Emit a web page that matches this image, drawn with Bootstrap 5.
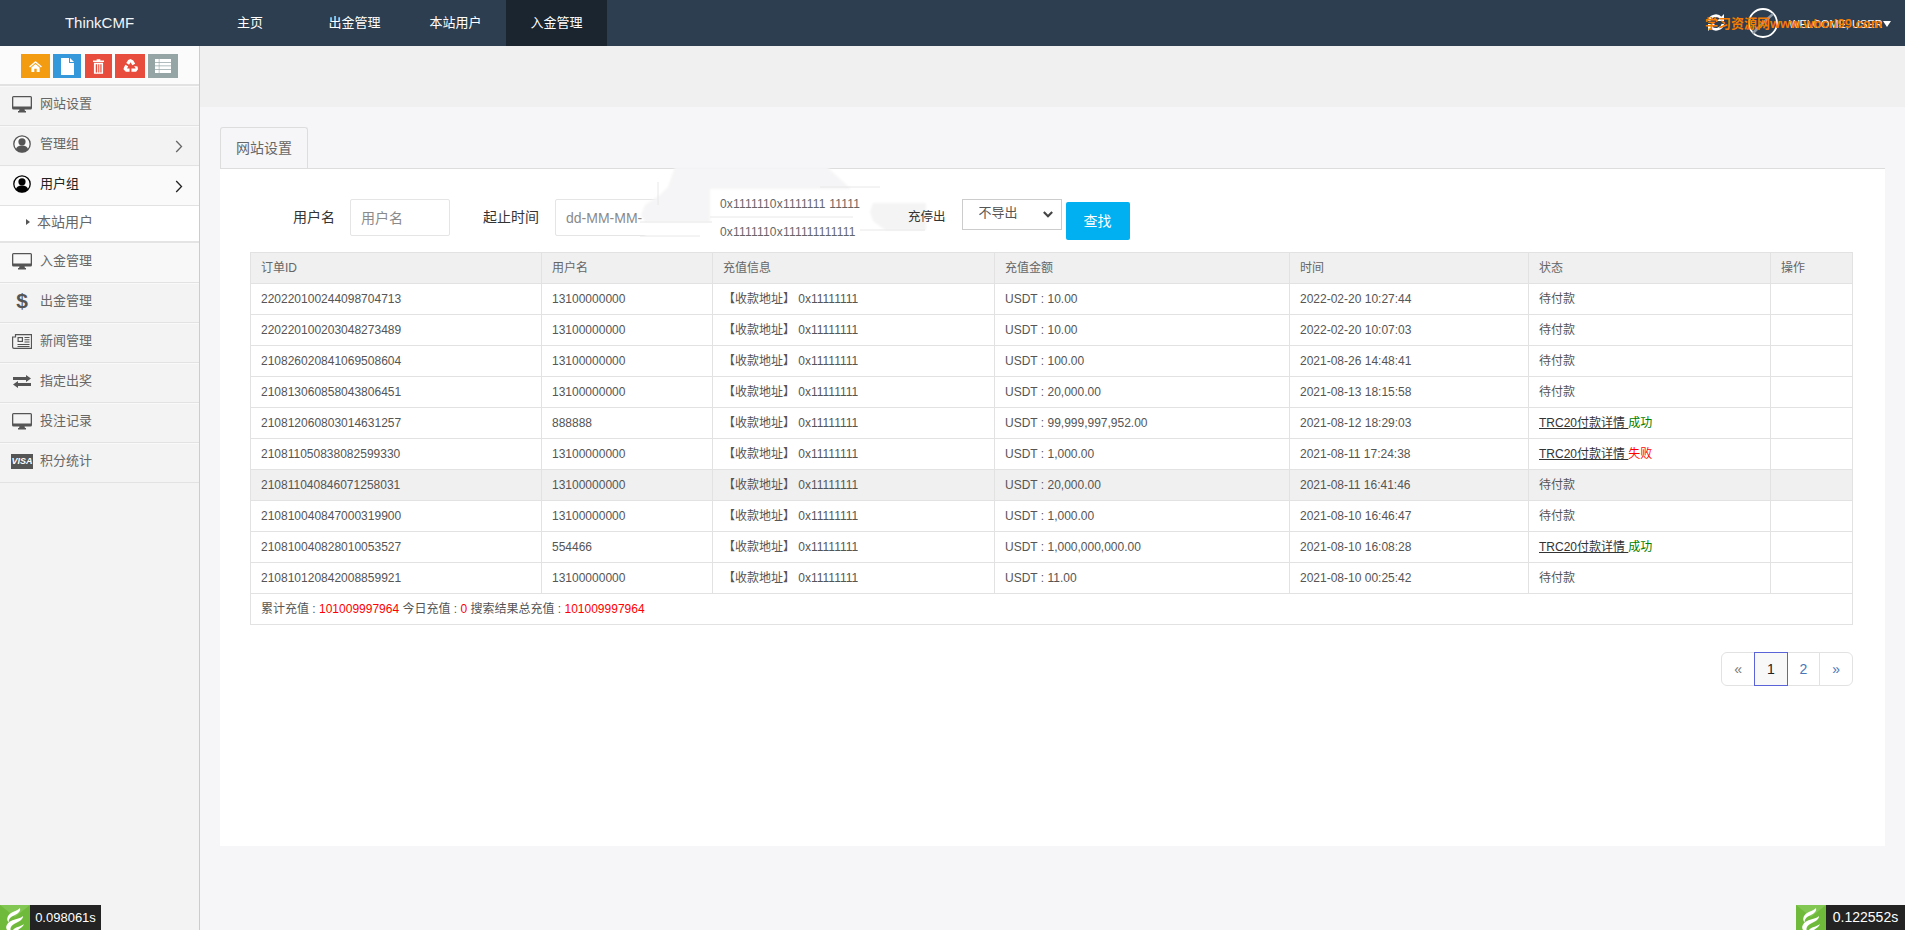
<!DOCTYPE html>
<html lang="zh-CN">
<head>
<meta charset="utf-8">
<title>ThinkCMF</title>
<link href="https://cdn.jsdelivr.net/npm/bootstrap@5.3.0/dist/css/bootstrap.min.css" rel="stylesheet">
<style>
html,body{height:100%;overflow:hidden}
body{font-family:"Liberation Sans","Noto Sans CJK SC",sans-serif;font-size:12px;color:#555;background:#f6f6f8}
.topbar{height:46px;background:#2c3e50;padding:0;flex-wrap:nowrap;justify-content:flex-start}
.topbar .brandname{width:199px;text-align:center;color:#f4f6f7;font-size:15px;line-height:46px;padding:0;margin:0}
.topitem{display:block;height:46px;line-height:46px;padding:0;color:#fff;font-size:13px;text-decoration:none;width:101px;text-align:center;white-space:nowrap}
.topitem.first{width:76px;margin:0 16px 0 13px}
.topitem.on{background:#1a252f}
.topitem:hover{color:#fff}
.userzone{position:relative;margin-left:auto;height:46px;width:205px;color:#fff}
.userzone .rfr{position:absolute;left:6px;top:13px}
.userzone .ava{position:absolute;left:48px;top:8px}
.userzone .wel{position:absolute;left:89px;top:17px;font-size:11px;line-height:14px;color:#fff;white-space:nowrap}
.userzone .car{position:absolute;left:183px;top:21px;width:0;height:0;border:4px solid transparent;border-top:6px solid #fff;border-bottom:0}
.wmark{position:absolute;left:5px;top:15px;color:#f57c00;font-weight:700;font-size:13px;line-height:18px;white-space:nowrap}
.shell{height:884px}
.sidecol{width:200px;flex:none;background:#f3f3f3;border-right:1px solid #ccc}
.toolrow{height:40px;background:#fbfbfb;border-bottom:2px solid #e2e2e2;padding:8px 0 0 21px;gap:3px}
.tbtn{display:flex;align-items:center;justify-content:center;height:24px;border:0;border-radius:0;padding:0}
.t1{width:29px;background:#f39c12}.t2{width:28px;background:#3498db;margin-right:1px}.t3{width:27px;background:#e74c3c}.t4{width:30px;background:#e74c3c}.t5{width:30px;background:#95a5a6}
.sideitem{display:flex;align-items:center;height:40px;border-bottom:1px solid #e2e2e2;border-top:1px solid #f9f9f9;color:#666;font-size:13px;padding:0 0 4px 0;text-decoration:none;position:relative}
.sideitem .ic{width:44px;margin-right:-4px;flex:none;display:flex;justify-content:center;color:#555}
.sideitem .chev{position:absolute;left:175px;top:13px}
.sideitem.open{background:#fafafa;color:#222}
.sideitem.open .ic{color:#000}
.sideitem.soft{background:#f8f8f8}
.subitem{display:flex;align-items:center;height:37px;background:#fff;border-bottom:2px solid #e4e4e4;color:#666;font-size:14px;padding:0 0 3px 26px;gap:7px}
.subitem b{display:block;width:0;height:0;border:3.5px solid transparent;border-left:4px solid #555;border-right:0}
.dollar{font-size:21px;font-weight:700;line-height:20px;color:#555}
.visa{display:block;width:22px;height:15px;background:#555;color:#fff;font-size:9px;line-height:15px;font-weight:700;font-style:italic;text-align:center}
.mainwrap{flex:1;min-width:0;display:flex;flex-direction:column}
.greyband{height:61px;background:#f0f0f0;flex:none}
.contentzone{padding:20px 20px 0 20px;flex:1}
.tabhead{display:block;width:88px;height:42px;line-height:40px;text-align:center;background:#f6f6f8;border:1px solid #ddd;border-bottom:0;border-radius:3px 3px 0 0;color:#666;font-size:14px}
.panelbox{background:#fff;border-top:1px solid #ddd;height:678px;margin-top:-1px;padding:30px 33px 0 30px}
.filterrow{height:53px;position:relative;align-items:flex-start}
.flabel{color:#333;font-size:14px;line-height:37px;white-space:nowrap}
.finput.form-control{height:37px;border:1px solid #e5e5e5;border-radius:2px;font-size:14px;padding:0 10px;color:#777;box-shadow:none;flex:none}
.finput.form-control::placeholder{color:#8a8a8a}
.wname.form-control{width:100px}
.wdate.form-control{width:165px}
.lb1{margin-left:43px;margin-right:15px}
.lb2{margin-left:33px;margin-right:16px}
.lb3{margin-left:188px;margin-right:16px;font-size:12.5px;position:relative;z-index:1}
.fselect.form-select{width:100px;height:31px;border:1px solid #ccc;border-radius:0;font-size:13px;color:#555;padding:0 0 4px 16px;background-image:url("data:image/svg+xml,%3csvg xmlns='http://www.w3.org/2000/svg' viewBox='0 0 12 8'%3e%3cpath fill='none' stroke='%23444' stroke-width='2.600' d='M1 1l5 5 5-5'/%3e%3c/svg%3e");background-position:right 8px center;background-size:10px 7px;flex:none}
.findbtn.btn{width:64px;height:38px;margin:3px 0 0 4px;background:#00b0f0;border:0;border-radius:2px;color:#fff;font-size:14px;padding:0}
.smear{position:absolute;left:1px;top:0;pointer-events:none;overflow:visible}
.hexline{position:absolute;left:470px;font-size:12px;line-height:14px;color:#666;white-space:nowrap;letter-spacing:.2px}
.line1{top:-2px}
.line2{top:26px}
.ordertable.table{table-layout:fixed;width:1602px;margin:0;font-size:12px;color:#555;border-color:#e2e2e2;--bs-table-color:#555;--bs-table-bg:transparent;--bs-table-border-color:#e2e2e2}
.ordertable.table th,.ordertable.table td{height:31px;padding:0 10px;vertical-align:middle;font-weight:400;white-space:nowrap;line-height:14px;border-width:1px}
.ordertable.table thead th{background:#f0f0f0;color:#666;border-bottom-width:1px}
.ordertable.table tr.hov td{background:#f0f0f0}
.ordertable a{color:#333;text-decoration:underline}
.c1{width:291px}.c2{width:171px}.c3{width:282px}.c4{width:295px}.c5{width:239px}.c6{width:242px}.c7{width:82px}
.okay{color:green}.fail,.redn{color:red}
.pagerow{margin:27px -1px 0 0;justify-content:flex-end}
.pagerow .page-link{width:33.7px;height:34px;padding:0;line-height:32px;text-align:center;font-size:14px;border-color:#e2e2e2;color:#4a76b8}
.pagerow .page-item:first-child .page-link{color:#777}
.pagerow .page-item.active .page-link{background:#f8f8f8;color:#222;border-color:#5a63d8;z-index:3}
.tracebox{position:fixed;bottom:0;height:25px;display:flex;z-index:5}
.tracebox span{display:block;background:#232323;color:#fff;line-height:25px;text-align:center}
.tl{left:0}.tl span{width:71px;font-size:13px}
.tr2{right:0}.tr2 span{width:79px;font-size:14px}
</style>
</head>
<body>
<svg width="0" height="0" class="position-absolute">
  <symbol id="mon" viewBox="0 0 20 17"><path fill="currentColor" d="M1.500 0h17A1.500 1.500 0 0 1 20 1.500v10.500a1.500 1.500 0 0 1-1.500 1.500H12.500l.5 1.500h1v1.500H6V15h1l.5-1.500H1.500A1.500 1.500 0 0 1 0 12V1.500A1.500 1.500 0 0 1 1.500 0zM1.300 1.300v9.200h17.400V1.300z"/></symbol>
  <symbol id="usr" viewBox="0 0 18 18"><circle cx="9" cy="9" r="8.200" fill="#fafafa" stroke="currentColor" stroke-width="1.300"/><circle cx="9" cy="6.800" r="3.600" fill="currentColor"/><path fill="currentColor" d="M2.800 14.500c.6-2.900 2.800-4 6.200-4s5.600 1.100 6.200 4A8 8 0 0 1 9 17.300a8 8 0 0 1-6.200-2.800z"/></symbol>
  <symbol id="chv" viewBox="0 0 8 13"><path d="M1.200 1l5.300 5.500L1.200 12" fill="none" stroke="currentColor" stroke-width="1.300"/></symbol>
  <symbol id="flame" viewBox="0 0 30 25"><rect width="30" height="25" fill="#6fba3a"/><path d="M0 0h30L15 12z" fill="#82c654"/><path fill="#fff" d="M20 3c1 4-3 6-7 8-3 1.500-5 4-4 6.500-3-2-2-7 2-9.500 3-2 7-2.500 9-5z"/><path fill="#fff" d="M23 11c0 4-4 5.500-8 7.500-3 1.500-5 3.500-4.500 6.500H7c-2-3 0-7 4-9 4-2.200 9-2 12-5z"/><path fill="#fff" d="M24 19c-1 3-4 4-6 6h-5c2-3 7-3 11-6z"/></symbol>
</svg>

<nav class="navbar topbar">
  <div class="navbar-brand brandname">ThinkCMF</div>
  <a class="topitem first" href="#">主页</a>
  <a class="topitem" href="#">出金管理</a>
  <a class="topitem" href="#">本站用户</a>
  <a class="topitem on" href="#">入金管理</a>
  <div class="userzone">
    <svg class="rfr" width="20" height="19" viewBox="0 0 20 19"><path fill="none" stroke="#fff" stroke-width="2.600" d="M3 8a7 7 0 0 1 12-3M17 11a7 7 0 0 1-12 3"/><path fill="#fff" d="M18 1v7h-7zM2 18v-7h7z"/></svg>
    <svg class="ava" width="30" height="30" viewBox="0 0 30 30"><circle cx="15" cy="15" r="14" fill="#2c3e50" stroke="#fff" stroke-width="1.800"/><path d="M25 6l-9 8-3 3-8 8" stroke="#8a97a3" stroke-width="2.500" fill="none"/></svg>
    <span class="wel">WELCOME, USER</span>
    <span class="car"></span>
    <span class="wmark">学习资源网www.wbcrl99.com</span>
  </div>
</nav>

<div class="d-flex shell">
  <aside class="sidecol">
    <div class="toolrow d-flex">
      <button class="btn tbtn t1" type="button" aria-label="home"><svg width="13" height="11" viewBox="0 0 14 12"><path fill="#fff" d="M7 0l7 6-1 1-6-5-6 5-1-1zM2.500 7L7 3.200 11.500 7v5H8.300V8.500H5.700V12H2.500z"/></svg></button>
      <button class="btn tbtn t2" type="button" aria-label="file"><svg width="13" height="17" viewBox="0 0 13 17"><path fill="#fff" d="M0 0h8v5h5v12H0zM9 0l4 4H9z"/></svg></button>
      <button class="btn tbtn t3" type="button" aria-label="trash"><svg width="11" height="15" viewBox="0 0 12 16"><path fill="#fff" d="M4 0h4v1.500h4V3H0V1.500h4zM1 4h10v12H1zm2 1.500v9h1.500v-9zm2.700 0v9h1.200v-9zm2.300 0v9H9.300v-9z"/></svg></button>
      <button class="btn tbtn t4" type="button" aria-label="recycle"><svg width="15" height="15" viewBox="0 0 16 16"><path fill="#fff" d="M8 0l3 1.500L13 5l-3 1.700L8 3.500 6.500 6 3.500 4.300 5.500 1zM2.500 6l3 1.700L4.300 10H7v3.500H3L.5 11l.5-2zM15.500 8l.5 3-2 2.500H9V10h4.500L12 7.500z"/></svg></button>
      <button class="btn tbtn t5" type="button" aria-label="list"><svg width="16" height="14" viewBox="0 0 16 14"><path fill="#fff" d="M0 0h16v3H0zM0 3.700h16v2.800H0zM0 7.200h16V10H0zM0 10.700h16V14H0z"/><path fill="#95a5a6" d="M3.800 0h.6v14h-.6z"/></svg></button>
    </div>
    <div class="sideitem"><span class="ic"><svg width="20" height="17" aria-hidden="true"><use href="#mon"/></svg></span>网站设置</div>
    <div class="sideitem"><span class="ic"><svg width="18" height="18" aria-hidden="true"><use href="#usr"/></svg></span>管理组<svg class="chev" width="8" height="13" aria-hidden="true"><use href="#chv"/></svg></div>
    <div class="sideitem open"><span class="ic"><svg width="18" height="18" aria-hidden="true"><use href="#usr"/></svg></span>用户组<svg class="chev" width="8" height="13" aria-hidden="true"><use href="#chv"/></svg></div>
    <div class="subitem"><b></b>本站用户</div>
    <div class="sideitem soft"><span class="ic"><svg width="20" height="17" aria-hidden="true"><use href="#mon"/></svg></span>入金管理</div>
    <div class="sideitem"><span class="ic"><span class="dollar">$</span></span>出金管理</div>
    <div class="sideitem"><span class="ic"><svg width="20" height="15" viewBox="0 0 20 15" aria-hidden="true"><path fill="none" stroke="#555" stroke-width="1.200" d="M3.500.6h16v13.800H2A1.500 1.500 0 0 1 .6 13V3h2.900z"/><path fill="#555" d="M5.500 3H11v5H5.500zM12.500 3h5v1h-5zM12.500 5.200h5v1h-5zM12.500 7.500h5v1h-5zM5.500 10h12v1h-12zM5.500 12h12v1h-12z"/><path fill="#fff" d="M6.700 4.200h3.100v2.600H6.700z"/></svg></span>新闻管理</div>
    <div class="sideitem"><span class="ic"><svg width="18" height="13" viewBox="0 0 18 13" aria-hidden="true"><path fill="#555" d="M0 2h13V0l5 3.500-5 3.500V5H0zM18 8H5V6L0 9.500 5 13v-2h13z"/></svg></span>指定出奖</div>
    <div class="sideitem"><span class="ic"><svg width="20" height="17" aria-hidden="true"><use href="#mon"/></svg></span>投注记录</div>
    <div class="sideitem"><span class="ic"><span class="visa">VISA</span></span>积分统计</div>
  </aside>

  <main class="mainwrap">
    <div class="greyband"></div>
    <div class="contentzone">
      <div class="tabhead">网站设置</div>
      <div class="panelbox">
        <form class="filterrow d-flex">
          <label class="flabel lb1">用户名</label>
          <input class="form-control finput wname" placeholder="用户名">
          <label class="flabel lb2">起止时间</label>
          <input class="form-control finput wdate" placeholder="dd-MM-MM-">
          <svg class="smear" width="640" height="53" viewBox="0 0 640 53" aria-hidden="true">
            <defs><filter id="bl" x="-10%" y="-20%" width="120%" height="140%"><feGaussianBlur stdDeviation="1"/></filter></defs>
            <g filter="url(#bl)">
              <path fill="#f5f5f7" d="M424-32H576l24 22H459V23H394l-4-7 4-10 15-10 8-8z"/>
              <path fill="#fff" d="M459-9H622V45H459zM394 24H470V46H394z"/>
              <path fill="#f4f4f5" d="M622 4H675V31H634l-12-9-3-9z"/>
            </g>
            <path stroke="#e8e8e8" fill="none" d="M569-12h60M459 18h143M389 23h72M389 37h60M609 31h65M407-17v23"/>
          </svg>
          <span class="hexline line1">0x1111110x1111111 11111</span>
          <span class="hexline line2">0x1111110x111111111111</span>
          <label class="flabel lb3">充停出</label>
          <select class="form-select fselect"><option>不导出</option></select>
          <button class="btn findbtn" type="button">查找</button>
        </form>
        <table class="table table-bordered ordertable">
          <colgroup><col class="c1"><col class="c2"><col class="c3"><col class="c4"><col class="c5"><col class="c6"><col class="c7"></colgroup>
          <thead><tr><th>订单ID</th><th>用户名</th><th>充值信息</th><th>充值金额</th><th>时间</th><th>状态</th><th>操作</th></tr></thead>
          <tbody>
            <tr><td>220220100244098704713</td><td>13100000000</td><td>【收款地址】 0x11111111</td><td>USDT : 10.00</td><td>2022-02-20 10:27:44</td><td>待付款</td><td></td></tr>
            <tr><td>220220100203048273489</td><td>13100000000</td><td>【收款地址】 0x11111111</td><td>USDT : 10.00</td><td>2022-02-20 10:07:03</td><td>待付款</td><td></td></tr>
            <tr><td>210826020841069508604</td><td>13100000000</td><td>【收款地址】 0x11111111</td><td>USDT : 100.00</td><td>2021-08-26 14:48:41</td><td>待付款</td><td></td></tr>
            <tr><td>210813060858043806451</td><td>13100000000</td><td>【收款地址】 0x11111111</td><td>USDT : 20,000.00</td><td>2021-08-13 18:15:58</td><td>待付款</td><td></td></tr>
            <tr><td>210812060803014631257</td><td>888888</td><td>【收款地址】 0x11111111</td><td>USDT : 99,999,997,952.00</td><td>2021-08-12 18:29:03</td><td><a href="#">TRC20付款详情 </a><span class="okay">成功</span></td><td></td></tr>
            <tr><td>210811050838082599330</td><td>13100000000</td><td>【收款地址】 0x11111111</td><td>USDT : 1,000.00</td><td>2021-08-11 17:24:38</td><td><a href="#">TRC20付款详情 </a><span class="fail">失败</span></td><td></td></tr>
            <tr class="hov"><td>210811040846071258031</td><td>13100000000</td><td>【收款地址】 0x11111111</td><td>USDT : 20,000.00</td><td>2021-08-11 16:41:46</td><td>待付款</td><td></td></tr>
            <tr><td>210810040847000319900</td><td>13100000000</td><td>【收款地址】 0x11111111</td><td>USDT : 1,000.00</td><td>2021-08-10 16:46:47</td><td>待付款</td><td></td></tr>
            <tr><td>210810040828010053527</td><td>554466</td><td>【收款地址】 0x11111111</td><td>USDT : 1,000,000,000.00</td><td>2021-08-10 16:08:28</td><td><a href="#">TRC20付款详情 </a><span class="okay">成功</span></td><td></td></tr>
            <tr><td>210810120842008859921</td><td>13100000000</td><td>【收款地址】 0x11111111</td><td>USDT : 11.00</td><td>2021-08-10 00:25:42</td><td>待付款</td><td></td></tr>
            <tr><td colspan="7">累计充值 : <span class="redn">101009997964</span> 今日充值 : <span class="redn">0</span> 搜索结果总充值 : <span class="redn">101009997964</span></td></tr>
          </tbody>
        </table>
        <ul class="pagination pagerow">
          <li class="page-item"><a class="page-link" href="#">«</a></li>
          <li class="page-item active"><a class="page-link" href="#">1</a></li>
          <li class="page-item"><a class="page-link" href="#">2</a></li>
          <li class="page-item"><a class="page-link" href="#">»</a></li>
        </ul>
      </div>
    </div>
  </main>
</div>

<div class="tracebox tl"><svg width="30" height="25" aria-hidden="true"><use href="#flame"/></svg><span>0.098061s</span></div>
<div class="tracebox tr2"><svg width="30" height="25" aria-hidden="true"><use href="#flame"/></svg><span>0.122552s</span></div>
<script src="https://cdn.jsdelivr.net/npm/bootstrap@5.3.0/dist/js/bootstrap.bundle.min.js"></script>
</body>
</html>
